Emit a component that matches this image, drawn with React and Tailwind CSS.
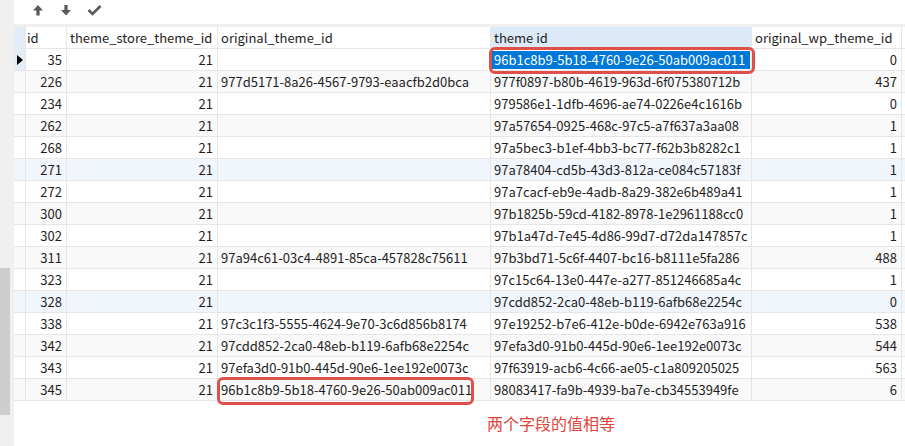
import React from "react";

const rows = [
  ["35", "21", "", "96b1c8b9-5b18-4760-9e26-50ab009ac011", "0"],
  ["226", "21", "977d5171-8a26-4567-9793-eaacfb2d0bca", "977f0897-b80b-4619-963d-6f075380712b", "437"],
  ["234", "21", "", "979586e1-1dfb-4696-ae74-0226e4c1616b", "0"],
  ["262", "21", "", "97a57654-0925-468c-97c5-a7f637a3aa08", "1"],
  ["268", "21", "", "97a5bec3-b1ef-4bb3-bc77-f62b3b8282c1", "1"],
  ["271", "21", "", "97a78404-cd5b-43d3-812a-ce084c57183f", "1"],
  ["272", "21", "", "97a7cacf-eb9e-4adb-8a29-382e6b489a41", "1"],
  ["300", "21", "", "97b1825b-59cd-4182-8978-1e2961188cc0", "1"],
  ["302", "21", "", "97b1a47d-7e45-4d86-99d7-d72da147857c", "1"],
  ["311", "21", "97a94c61-03c4-4891-85ca-457828c75611", "97b3bd71-5c6f-4407-bc16-b8111e5fa286", "488"],
  ["323", "21", "", "97c15c64-13e0-447e-a277-851246685a4c", "1"],
  ["328", "21", "", "97cdd852-2ca0-48eb-b119-6afb68e2254c", "0"],
  ["338", "21", "97c3c1f3-5555-4624-9e70-3c6d856b8174", "97e19252-b7e6-412e-b0de-6942e763a916", "538"],
  ["342", "21", "97cdd852-2ca0-48eb-b119-6afb68e2254c", "97efa3d0-91b0-445d-90e6-1ee192e0073c", "544"],
  ["343", "21", "97efa3d0-91b0-445d-90e6-1ee192e0073c", "97f63919-acb6-4c66-ae05-c1a809205025", "563"],
  ["345", "21", "96b1c8b9-5b18-4760-9e26-50ab009ac011", "98083417-fa9b-4939-ba7e-cb34553949fe", "6"],
];

const rowBg = (i) => {
  if (i === 5 || i === 11) return "bg-[#f0f6fc]";
  if (i % 2 === 1) return "bg-[#f9f9f9]";
  return "bg-white";
};

const cell = "h-full border-r border-[#e6e6e6] flex items-center";

export default function App() {
  return (
    <div
      className="w-[905px] h-[446px] flex bg-white overflow-hidden text-[13px] text-[#1e1e1e]"
      style={{ fontFamily: '"Noto Sans CJK SC", "Noto Sans", sans-serif' }}
    >
      <div className="w-[14px] shrink-0 bg-[#f0f0f0] pt-[268px]">
        <div className="w-[10px] h-[147px] bg-[#cdcdcd]" />
      </div>
      <div className="flex-1 flex flex-col">
        <div className="h-[24px] flex items-start pt-[4px] pl-[18px]">
          <svg width="12" height="12" viewBox="0 0 12 12"><path d="M6 1 L11 6.5 H7.6 V11.5 H4.4 V6.5 H1 Z" fill="#5a5a5a" /></svg>
          <svg width="12" height="12" viewBox="0 0 12 12" className="ml-[16px]"><path d="M6 11.5 L11 6 H7.6 V1 H4.4 V6 H1 Z" fill="#5a5a5a" /></svg>
          <svg width="15" height="12" viewBox="0 0 15 12" className="ml-[15px]"><path d="M1.5 6 L5.5 10 L13.5 2" stroke="#5a5a5a" strokeWidth="2.6" fill="none" /></svg>
        </div>
        <div className="h-[3px] bg-[#f0f0f0]" />
        <div className="relative">
          <div className="flex h-[22px] border-b border-[#e6e6e6] bg-white">
            <div className={`${cell} w-[12px] bg-[#e3edf8]`} />
            <div className={`${cell} w-[41px] pl-[1px]`}>id</div>
            <div className={`${cell} w-[151px] pl-[3px]`}>theme_store_theme_id</div>
            <div className={`${cell} w-[273px] pl-[3px]`}>original_theme_id</div>
            <div className={`${cell} w-[261px] pl-[3px] bg-[#dce9f7]`}>theme id</div>
            <div className={`${cell} w-[150px] pl-[3px]`}>original_wp_theme_id</div>
          </div>
          {rows.map((r, i) => (
            <div key={i} className={`flex h-[22px] border-b border-[#e6e6e6] ${rowBg(i)}`}>
              <div className={`${cell} w-[12px] justify-center ${i === 0 ? "bg-[#e3edf8]" : ""}`}>
                {i === 0 && (
                  <svg width="6" height="10" viewBox="0 0 6 10"><path d="M0 0 L6 5 L0 10 Z" fill="#000" /></svg>
                )}
              </div>
              <div className={`${cell} w-[41px] justify-end pr-[4px]`}>{r[0]}</div>
              <div className={`${cell} w-[151px] justify-end pr-[4px]`}>{r[1]}</div>
              <div className={`${cell} w-[273px] pl-[3px]`}>{r[2]}</div>
              <div className={`${cell} w-[261px] ${i === 0 ? "px-[1px]" : "pl-[3px]"}`}>
                {i === 0 ? (
                  <div className="w-full h-[18px] bg-[#0078d7] text-white flex items-center pl-[2px]">{r[3]}</div>
                ) : (
                  r[3]
                )}
              </div>
              <div className={`${cell} w-[150px] justify-end pr-[4px]`}>{r[4]}</div>
            </div>
          ))}
          <div className="absolute left-[475px] top-[20px] w-[266px] h-[27px] border-[3px] border-[#e0504a] rounded-[6px]" />
          <div className="absolute left-[203px] top-[350px] w-[257px] h-[28px] border-[3px] border-[#e0504a] rounded-[6px]" />
        </div>
        <div className="pl-[473px] pt-[10px] text-[16px] text-[#e0443c]">两个字段的值相等</div>
      </div>
    </div>
  );
}
